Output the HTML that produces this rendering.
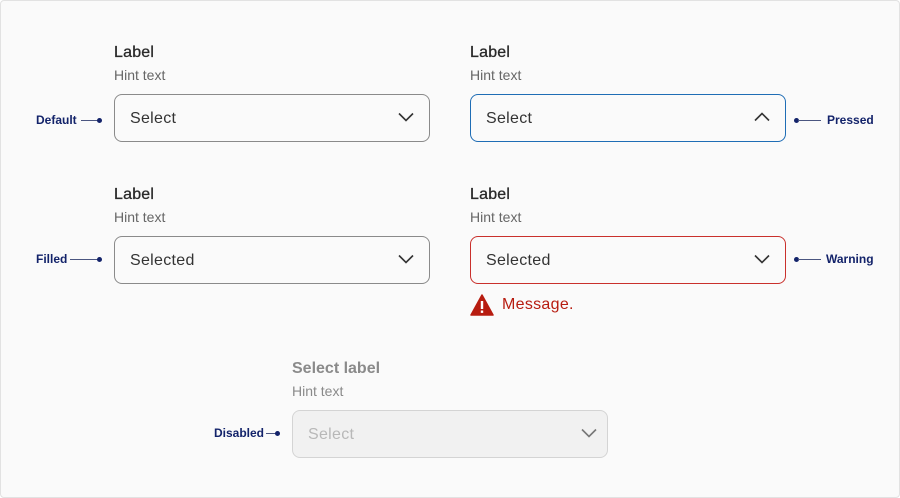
<!DOCTYPE html>
<html><head><style>
body{margin:0;width:900px;height:498px;background:#fff;font-family:"Liberation Sans",sans-serif;position:relative;overflow:hidden}
.frame{position:absolute;left:0;top:0;width:898px;height:496px;border:1px solid #e2e2e2;border-radius:4px;background:#fafafa}
.a{position:absolute}
.lbl{font-size:16px;color:#2a2a2a;font-weight:500;letter-spacing:0.2px;-webkit-text-stroke:0.3px #2a2a2a}
.hint{font-size:14px;color:#666}
.box{position:absolute;width:314px;height:46px;border:1px solid #8a8a8a;border-radius:8px;background:#fafafa}
.box span{position:absolute;left:15px;top:15px;font-size:16px;color:#333;letter-spacing:0.3px}
.box svg{position:absolute;right:15px;top:17px}
.ann{position:absolute;font-size:12px;font-weight:bold;color:#13236a}
.ln{position:absolute;height:1px;background:#4a5580}
.dot{position:absolute;width:5px;height:5px;border-radius:50%;background:#13236a}
</style></head><body>
<div class="frame"></div>

<div class="a lbl" style="left:114px;top:44px">Label</div>
<div class="a hint" style="left:114px;top:67px">Hint text</div>
<div class="box" style="left:114px;top:94px"><span>Select</span><svg width="16" height="10" viewBox="0 0 16 10"><path d="M1 1.5l7 7 7-7" fill="none" stroke="#333" stroke-width="1.6"/></svg></div>
<div class="ann" style="left:36px;top:113px">Default</div><div class="ln" style="left:81px;top:120px;width:17px"></div><div class="dot" style="left:97px;top:118px"></div>

<div class="a lbl" style="left:470px;top:44px">Label</div>
<div class="a hint" style="left:470px;top:67px">Hint text</div>
<div class="box" style="left:470px;top:94px;border-color:#1f6db5"><span>Select</span><svg width="16" height="10" viewBox="0 0 16 10"><path d="M1 8.5l7-7 7 7" fill="none" stroke="#333" stroke-width="1.6"/></svg></div>
<div class="dot" style="left:794px;top:118px"></div><div class="ln" style="left:798px;top:120px;width:23px"></div><div class="ann" style="left:827px;top:113px">Pressed</div>

<div class="a lbl" style="left:114px;top:186px">Label</div>
<div class="a hint" style="left:114px;top:209px">Hint text</div>
<div class="box" style="left:114px;top:236px"><span>Selected</span><svg width="16" height="10" viewBox="0 0 16 10"><path d="M1 1.5l7 7 7-7" fill="none" stroke="#333" stroke-width="1.6"/></svg></div>
<div class="ann" style="left:36px;top:252px">Filled</div><div class="ln" style="left:70px;top:259px;width:28px"></div><div class="dot" style="left:97px;top:257px"></div>

<div class="a lbl" style="left:470px;top:186px">Label</div>
<div class="a hint" style="left:470px;top:209px">Hint text</div>
<div class="box" style="left:470px;top:236px;border-color:#c9302c"><span>Selected</span><svg width="16" height="10" viewBox="0 0 16 10"><path d="M1 1.5l7 7 7-7" fill="none" stroke="#333" stroke-width="1.6"/></svg></div>
<div class="dot" style="left:794px;top:257px"></div><div class="ln" style="left:798px;top:259px;width:23px"></div><div class="ann" style="left:826px;top:252px">Warning</div>
<svg class="a" style="left:470px;top:294px" width="24" height="22" viewBox="0 0 24 22"><path d="M12 1L23 21H1Z" fill="#b71c10" stroke="#b71c10" stroke-width="1.5" stroke-linejoin="round"/><rect x="10.8" y="7" width="2.4" height="8" fill="#fff"/><rect x="10.8" y="16.5" width="2.4" height="2.4" fill="#fff"/></svg>
<div class="a" style="left:502px;top:296px;font-size:16px;color:#b71c10;letter-spacing:0.3px">Message.</div>

<div class="a" style="left:292px;top:360px;font-size:16px;font-weight:bold;color:#8a8a8a">Select label</div>
<div class="a hint" style="left:292px;top:383px;color:#8a8a8a">Hint text</div>
<div class="box" style="left:292px;top:410px;border-color:#d4d4d4;background:#f1f1f1"><span style="color:#b8b8b8">Select</span><svg width="16" height="10" viewBox="0 0 16 10" style="right:10px"><path d="M1 1.5l7 7 7-7" fill="none" stroke="#777" stroke-width="1.6"/></svg></div>
<div class="ann" style="left:214px;top:426px">Disabled</div><div class="ln" style="left:266px;top:433px;width:10px"></div><div class="dot" style="left:275px;top:431px"></div>
</body></html>
